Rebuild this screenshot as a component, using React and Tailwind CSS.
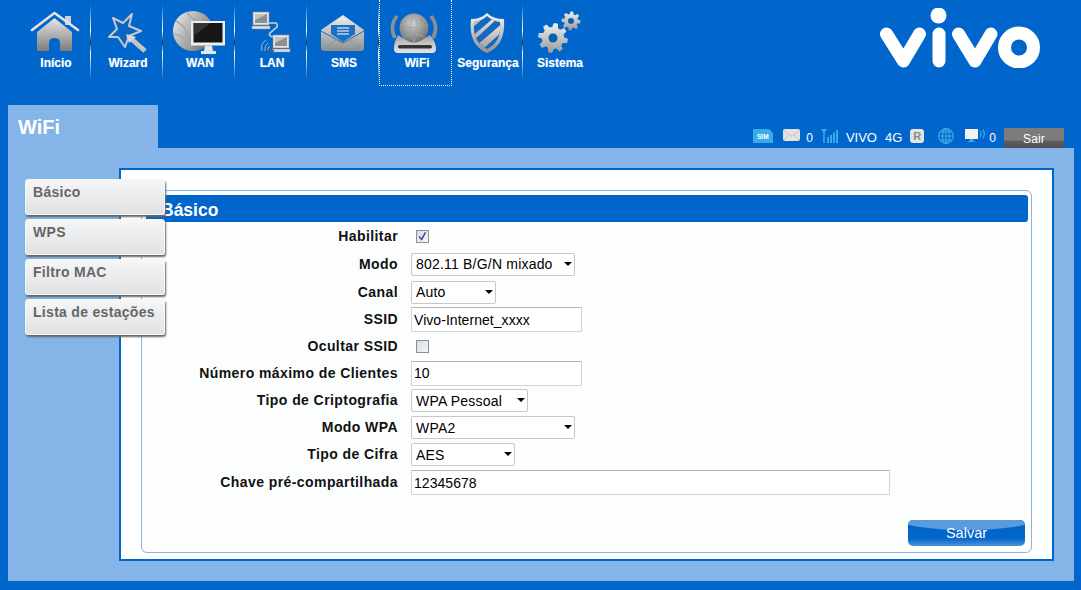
import React from "react";

// ---------- gear outline, teeth computed from radius ----------
function gearPath(cx, cy, outer, inner, teeth, rot = 0) {
  const pts = [];
  const step = (Math.PI * 2) / teeth;
  for (let i = 0; i < teeth; i++) {
    const a = rot + i * step;
    const w = step / 4;
    const add = (r, ang) => pts.push(`${(cx + r * Math.cos(ang)).toFixed(1)},${(cy + r * Math.sin(ang)).toFixed(1)}`);
    add(inner, a - w * 1.4);
    add(outer, a - w * 0.7);
    add(outer, a + w * 0.7);
    add(inner, a + w * 1.4);
  }
  return "M" + pts.join("L") + "Z";
}

const Grad = ({ id, from = "#eeeeee", to = "#777777", x2 = 0, y2 = 1 }) => (
  <linearGradient id={id} x1="0" y1="0" x2={x2} y2={y2}>
    <stop offset="0" stopColor={from} />
    <stop offset="1" stopColor={to} />
  </linearGradient>
);

// all nav icons use page coordinates in their viewBox
const IconBox = ({ x, children }) => (
  <svg viewBox={`${x} 8 68 48`} className="w-[68px] h-[48px] block">
    {children}
  </svg>
);

const HomeIcon = () => (
  <IconBox x={22}>
    <defs>
      <Grad id="home" from="#e6e6e6" to="#7c7c7c" />
    </defs>
    <rect x="65" y="16" width="6" height="9" fill="#cfcfcf" />
    <path d="M37 32L54.5 18L72 32V51H60V43Q60 38 54.5 38Q49 38 49 43V51H37Z" fill="url(#home)" />
    <path d="M32 30L54.5 13L78 30" fill="none" stroke="#e4e4e4" strokeWidth="2.6" strokeLinecap="round" strokeLinejoin="round" />
  </IconBox>
);

const WizardIcon = () => (
  <IconBox x={94}>
    <path d="M132 14L129 26L141 31L129 36L125 47L118 37L109 37L117 29L113 18L123 23Z" fill="#0a66c4" stroke="#c9c9c9" strokeWidth="2" strokeLinejoin="round" />
    <path d="M128 36L145 51" stroke="#c4c4c4" strokeWidth="5" />
    <path d="M126 34L136 37L129 43Z" fill="#d8d8d8" />
  </IconBox>
);

const WanIcon = () => (
  <IconBox x={166}>
    <defs>
      <Grad id="wang" from="#f0f0f0" to="#777777" x2={1} y2={0.6} />
    </defs>
    <circle cx="193" cy="31" r="20" fill="url(#wang)" />
    <path d="M176 21Q190 28 190 50M186 12Q196 24 209 24M174 34Q184 36 190 44" fill="none" stroke="#a8a8a8" strokeWidth="1.4" />
    <rect x="191" y="21" width="34" height="24.5" fill="#eeeeee" />
    <rect x="193.5" y="23" width="29" height="19.5" fill="#171717" />
    <path d="M193.5 23H211L193.5 36Z" fill="#4a4a4a" opacity="0.6" />
    <path d="M205 45.5H212L213 51H216V54H201V51H204Z" fill="#e6e6e6" />
  </IconBox>
);

const Computer = ({ x, y }) => (
  <g>
    <rect x={x + 1} y={y} width="16" height="13" fill="#e6e6e6" stroke="#8c8c8c" strokeWidth="0.6" />
    <rect x={x + 3} y={y + 2} width="12" height="9" fill="#8f8f8f" />
    <path d={`M${x + 3} ${y + 2}h12l-12 6z`} fill="#c2c2c2" />
    <rect x={x} y={y + 14} width="18" height="3" fill="#dedede" stroke="#8c8c8c" strokeWidth="0.5" />
  </g>
);

const LanIcon = () => (
  <IconBox x={238}>
    <Computer x={252} y={12} />
    <Computer x={272} y={35} />
    <path d="M269 23H275Q278 23 277 27L270 33Q268 36 273 37" fill="none" stroke="#cfcfcf" strokeWidth="1.6" />
    <path d="M268 50L274 51" stroke="#555" strokeWidth="1.8" />
    <path d="M262 51Q260 44 266 40M265 51Q264 46 268 43M268 50Q267 48 270 46" fill="none" stroke="#a9b6c4" strokeWidth="1" />
  </IconBox>
);

const SmsIcon = () => (
  <IconBox x={310}>
    <defs>
      <Grad id="env" from="#f0f0f0" to="#8e8e8e" />
    </defs>
    <path d="M321 30L343 15L364 30V48Q364 51 361 51H324Q321 51 321 48Z" fill="url(#env)" />
    <path d="M331 25H355V34L343 42L331 34Z" fill="#1c70c6" />
    <path d="M337 28H349M337 31H349M337 34H349" stroke="#b9cfe6" strokeWidth="1.6" />
    <path d="M321 31L343 43L364 31" fill="none" stroke="#1c70c6" strokeWidth="1" />
    <path d="M323 50L337 39M362 50L349 39" stroke="#6f9bc8" strokeWidth="1" />
  </IconBox>
);

const WifiIcon = () => (
  <IconBox x={382}>
    <defs>
      <linearGradient id="wfb" x1="0" y1="0" x2="0" y2="1">
        <stop offset="0" stopColor="#9c9c9c" />
        <stop offset="0.5" stopColor="#c8c8c8" />
        <stop offset="1" stopColor="#e4e4e4" />
      </linearGradient>
      <radialGradient id="wfg" cx="0.45" cy="0.35" r="0.7">
        <stop offset="0" stopColor="#d0d0d0" />
        <stop offset="1" stopColor="#6a6a6a" />
      </radialGradient>
    </defs>
    <path d="M397 16Q389 26 395 38M431 16Q439 26 433 38" fill="none" stroke="#8e8e8e" strokeWidth="3.6" />
    <path d="M398 35Q414 46 430 35Q436 42 436 49Q436 53 432 53H398Q394 53 394 49Q394 42 398 35Z" fill="url(#wfb)" />
    <circle cx="414" cy="28" r="14.5" fill="url(#wfg)" />
    <path d="M400 25Q414 30 428 25M404 37Q414 30 424 37M414 14Q407 28 414 42M414 14Q421 28 414 42" fill="none" stroke="#a2a2a2" strokeWidth="0.8" />
    <rect x="398" y="45" width="34" height="3.500" rx="1.700" fill="#333333" />
  </IconBox>
);

const ShieldIcon = () => (
  <IconBox x={454}>
    <defs>
      <Grad id="shd" from="#f5f5f5" to="#8f8f8f" />
      <Grad id="shi" from="#e9e9e9" to="#9e9e9e" />
      <clipPath id="shc">
        <path d="M474 22Q482 21 487 16Q492 21 500 22Q502 42 487 49Q472 42 474 22Z" />
      </clipPath>
    </defs>
    <path d="M471 19Q481 19 487 13Q493 19 504 19Q506 45 487 53Q468 45 471 19Z" fill="url(#shd)" />
    <path d="M474 22Q482 21 487 16Q492 21 500 22Q502 42 487 49Q472 42 474 22Z" fill="#1568bd" />
    <g clipPath="url(#shc)">
      <path d="M470 38L496 16L500 16L470 44Z" fill="url(#shi)" />
      <path d="M476 46L504 22L504 30L482 50Z" fill="url(#shi)" />
      <path d="M470 30L488 14L474 14Z" fill="url(#shi)" />
    </g>
  </IconBox>
);

const GearsIcon = () => (
  <IconBox x={526}>
    <defs>
      <Grad id="gr1" from="#f0f0f0" to="#9a9a9a" />
    </defs>
    <path d={gearPath(553, 38, 15, 11, 8, 0.2)} fill="url(#gr1)" />
    <circle cx="553" cy="38" r="4.5" fill="#0a5fb4" />
    <path d={gearPath(571, 21, 9.5, 7, 8, 0.1)} fill="url(#gr1)" />
    <circle cx="571" cy="21" r="3" fill="#0a5fb4" />
  </IconBox>
);

const navItems = [
  { label: "Início", Icon: HomeIcon, sep: true },
  { label: "Wizard", Icon: WizardIcon, sep: true },
  { label: "WAN", Icon: WanIcon, sep: true },
  { label: "LAN", Icon: LanIcon, sep: true },
  { label: "SMS", Icon: SmsIcon, sep: true },
  { label: "WiFi", Icon: WifiIcon, active: true, sep: false },
  { label: "Segurança", Icon: ShieldIcon, sep: true },
  { label: "Sistema", Icon: GearsIcon, sep: false },
];

const Separator = () => (
  <div className="w-[1px] mt-[4px] h-[76px] bg-[linear-gradient(to_bottom,#0066cc,#ffffff_35%,#0a2a55_50%,#ffffff_65%,#0066cc)]" />
);

function NavBar() {
  return (
    <nav className="flex pl-[19px] h-[86px]">
      {navItems.map(({ label, Icon, active, sep }) => (
        <React.Fragment key={label}>
          <div
            className={
              active
                ? "w-[73px] -mr-[1px] h-[86px] pl-[3px] pt-[8px] border border-dotted border-white border-t-0"
                : "w-[71px] h-[86px] pl-[3px] pt-[8px]"
            }
          >
            <div className={active ? "-ml-[1px]" : ""}>
              <Icon />
            </div>
            <div className="w-[68px] text-center text-white font-bold text-[12px] leading-[14px] whitespace-nowrap [text-shadow:0_0_1px_#6ea8e6]">
              {label}
            </div>
          </div>
          {sep && <Separator />}
        </React.Fragment>
      ))}
    </nav>
  );
}

const VivoLogo = () => (
  <svg viewBox="880 8 160 60" className="w-[160px] h-[60px] block">
    <g fill="none" stroke="#ffffff" strokeWidth="13" strokeLinecap="round" strokeLinejoin="round">
      <path d="M886.5 34L903.5 61L919.5 34" />
      <path d="M939 34V61" />
      <path d="M958.5 34L975 61L991 34" />
      <circle cx="1019" cy="47.5" r="14.5" />
    </g>
    <circle cx="938.5" cy="15.5" r="8" fill="#ffffff" />
  </svg>
);

// ---------- status bar ----------
const StatusBar = () => (
  <div className="flex-1 flex items-end justify-end pr-[10px]">
    <div className="flex items-center h-[20px] text-white text-[13px] leading-none">
      <svg viewBox="0 0 20 14" className="w-[20px] h-[14px] -mt-[4px]">
        <path d="M1 0H16L20 4V14H1Q0 14 0 13V1Q0 0 1 0Z" fill="#38ace8" />
        <text x="4" y="10" fontSize="6.5" fontWeight="700" fill="#ffffff" fontFamily="Liberation Sans, sans-serif">SIM</text>
      </svg>
      <svg viewBox="0 0 17 12" className="w-[17px] h-[12px] ml-[10px] -mt-[6px]">
        <rect width="17" height="12" rx="2" fill="#e2e2e2" />
        <path d="M1 2L8.5 7L16 2M1 11L6 6M16 11L11 6" stroke="#c4c4c4" fill="none" />
      </svg>
      <span className="ml-[6px] text-[12px]">0</span>
      <svg viewBox="0 0 17 14" className="w-[17px] h-[14px] ml-[8px] -mt-[5px]">
        <path d="M0 0H6L3.8 3V14H2.2V3Z" fill="#38ace8" />
        <path d="M6 8h2v6H6zM9 6h2v8H9zM12 3.500h2V14h-2zM15 1h2v13h-2z" fill="#38ace8" />
      </svg>
      <span className="ml-[8px] -mt-[1px]">VIVO</span>
      <span className="ml-[8px] -mt-[1px]">4G</span>
      <span className="ml-[8px] -mt-[4px] w-[14px] h-[14px] rounded-[3px] bg-[#e4e4e4] text-[#8a8a8a] text-[11px] font-bold flex items-center justify-center">R</span>
      <svg viewBox="0 0 16 16" className="w-[16px] h-[16px] ml-[14px] -mt-[5px]">
        <g fill="none" stroke="#38ace8" strokeWidth="1.2">
          <circle cx="8" cy="8" r="7.300" />
          <ellipse cx="8" cy="8" rx="3.500" ry="7.300" />
          <path d="M8 0.700V15.300M0.700 8H15.300M2 4H14M2 12H14" />
        </g>
      </svg>
      <svg viewBox="0 0 20 14" className="w-[20px] h-[14px] ml-[11px] -mt-[5px]">
        <rect x="0" y="0" width="13" height="10" fill="#f2f2f2" />
        <path d="M5 10H8V12H10V13H3V12H5Z" fill="#38ace8" />
        <path d="M15 2Q17 5 15 8M18 0.500Q20.500 5 18 9.500" fill="none" stroke="#38ace8" strokeWidth="1.3" />
      </svg>
      <span className="ml-[4px] text-[12px]">0</span>
      <button className="ml-[8px] w-[60px] h-[20px] text-[12px] tracking-[0.2px] text-white bg-[linear-gradient(to_bottom,#7c7c7c_0%,#7c7c7c_60%,#5e5e5e_65%,#505050_100%)] pt-[1px]">
        Sair
      </button>
    </div>
  </div>
);

// ---------- left menu ----------
const menuItems = ["Básico", "WPS", "Filtro MAC", "Lista de estações"];

const SideMenu = () => (
  <div className="relative z-10 w-[140px] shrink-0 -mr-[46px] pt-[11px] flex flex-col gap-[4px]">
    {menuItems.map((m) => (
      <div
        key={m}
        className="h-[36px] pl-[7px] pt-[4px] rounded-[3px] border border-[#f7f7f7] bg-[linear-gradient(to_bottom,#f5f6f6,#dfe1e3)] shadow-[1px_2px_2px_#666666] text-[#666666] text-[14px] font-bold tracking-[0.3px] leading-[16px] whitespace-nowrap"
      >
        {m}
      </div>
    ))}
  </div>
);

// ---------- form controls ----------
const Select = ({ value, width }) => (
  <div className={`relative ${width}`}>
    <select
      defaultValue={value}
      className="appearance-none block w-full h-[23px] bg-white border border-[#c8c8c8] rounded-[2px] pl-[4px] text-[14px] tracking-[0.2px] text-black leading-none outline-none"
    >
      <option>{value}</option>
    </select>
    <span className="absolute right-[3px] top-[9px] w-0 h-0 border-x-[4px] border-x-transparent border-t-[4px] border-t-black pointer-events-none" />
  </div>
);

const TextInput = ({ value, width }) => (
  <input
    type="text"
    defaultValue={value}
    className={`${width} block h-[25px] bg-white border border-[#d4d4d4] border-t-[#b5b5b5] rounded-[1px] px-[2px] text-[14px] tracking-[0.05px] text-black outline-none`}
  />
);

const Checkbox = ({ checked }) => (
  <span className="ml-[5px] w-[13px] h-[13px] border border-[#8f8f8f] bg-[linear-gradient(135deg,#d6dbe6,#f6f7fa)] block">
    {checked && (
      <svg viewBox="0 0 13 13" className="w-[11px] h-[11px]">
        <path d="M2.500 6.500L5.500 10L10 1.500" fill="none" stroke="#3c4a8c" strokeWidth="1.800" />
      </svg>
    )}
  </span>
);

const rows = [
  { label: "Habilitar", h: "h-[27px]", control: <Checkbox checked /> },
  { label: "Modo", h: "h-[28px]", control: <Select value="802.11 B/G/N mixado" width="w-[164px]" /> },
  { label: "Canal", h: "h-[28px]", control: <Select value="Auto" width="w-[85px]" /> },
  { label: "SSID", h: "h-[27px]", control: <TextInput value="Vivo-Internet_xxxx" width="w-[171px]" /> },
  { label: "Ocultar SSID", h: "h-[26px]", control: <Checkbox /> },
  { label: "Número máximo de Clientes", h: "h-[28px]", control: <TextInput value="10" width="w-[171px]" /> },
  { label: "Tipo de Criptografia", h: "h-[27px]", control: <Select value="WPA Pessoal" width="w-[117px]" /> },
  { label: "Modo WPA", h: "h-[27px]", control: <Select value="WPA2" width="w-[164px]" /> },
  { label: "Tipo de Cifra", h: "h-[27px]", control: <Select value="AES" width="w-[104px]" /> },
  { label: "Chave pré-compartilhada", h: "h-[29px]", control: <TextInput value="12345678" width="w-[479px]" /> },
];

const SaveButton = () => (
  <button className="relative overflow-hidden w-[117px] h-[26px] pt-[1px] rounded-[5px] bg-[linear-gradient(to_bottom,#0066cc_0%,#0066cc_70%,#4f93d8_100%)] text-white text-[14.5px]">
    <span className="absolute -left-[10px] -right-[10px] -top-[12px] h-[22px] rounded-[50%] bg-[#5a9bdc]" />
    <span className="relative">Salvar</span>
  </button>
);

export default function App() {
  return (
    <div className="w-full h-[590px] overflow-hidden flex flex-col bg-[#0066cc] font-['Liberation_Sans',Arial,sans-serif]">
      {/* HEADER */}
      <header className="h-[105px] shrink-0 flex justify-between">
        <NavBar />
        <div className="pt-[8px] pr-[41px]">
          <VivoLogo />
        </div>
      </header>

      {/* CONTENT */}
      <div className="flex-1 flex flex-col pl-[8px] pr-[7px] pb-[9px] min-h-0">
        <div className="h-[43px] shrink-0 flex">
          <div className="w-[150px] bg-[#85b4e8] pl-[10px] pt-[10px] text-white text-[20px] font-bold leading-[24px]">
            WiFi
          </div>
          <StatusBar />
        </div>

        <div className="flex-1 min-h-0 flex bg-[#85b4e8] pt-[20px] pl-[17px] pr-[20px] pb-[20px]">
          <SideMenu />

          <div className="flex-1 min-w-0 bg-white border-2 border-[#0066cc] pt-[20px] px-[20px] pb-[6px]">
            <div className="h-full flex flex-col bg-[#fcfefe] border border-[#85b4e8] rounded-[6px] pt-[4px] px-[4px]">
              <div className="h-[27px] shrink-0 -mr-[1px] bg-[#0066cc] rounded-[3px] pl-[15px] text-white text-[17.5px] font-bold leading-[31px]">
                Básico
              </div>

              <div className="flex flex-col pt-[1px]">
                {rows.map((r) => (
                  <div key={r.label} className={`${r.h} flex items-center`}>
                    <label className="w-[252px] text-right text-[14px] font-bold tracking-[0.42px] text-[#111111] whitespace-nowrap">
                      {r.label}
                    </label>
                    <div className="ml-[13px]">{r.control}</div>
                  </div>
                ))}
              </div>

              <div className="mt-auto flex justify-end pr-[2px] pb-[6px]">
                <SaveButton />
              </div>
            </div>
          </div>
        </div>
      </div>
    </div>
  );
}
